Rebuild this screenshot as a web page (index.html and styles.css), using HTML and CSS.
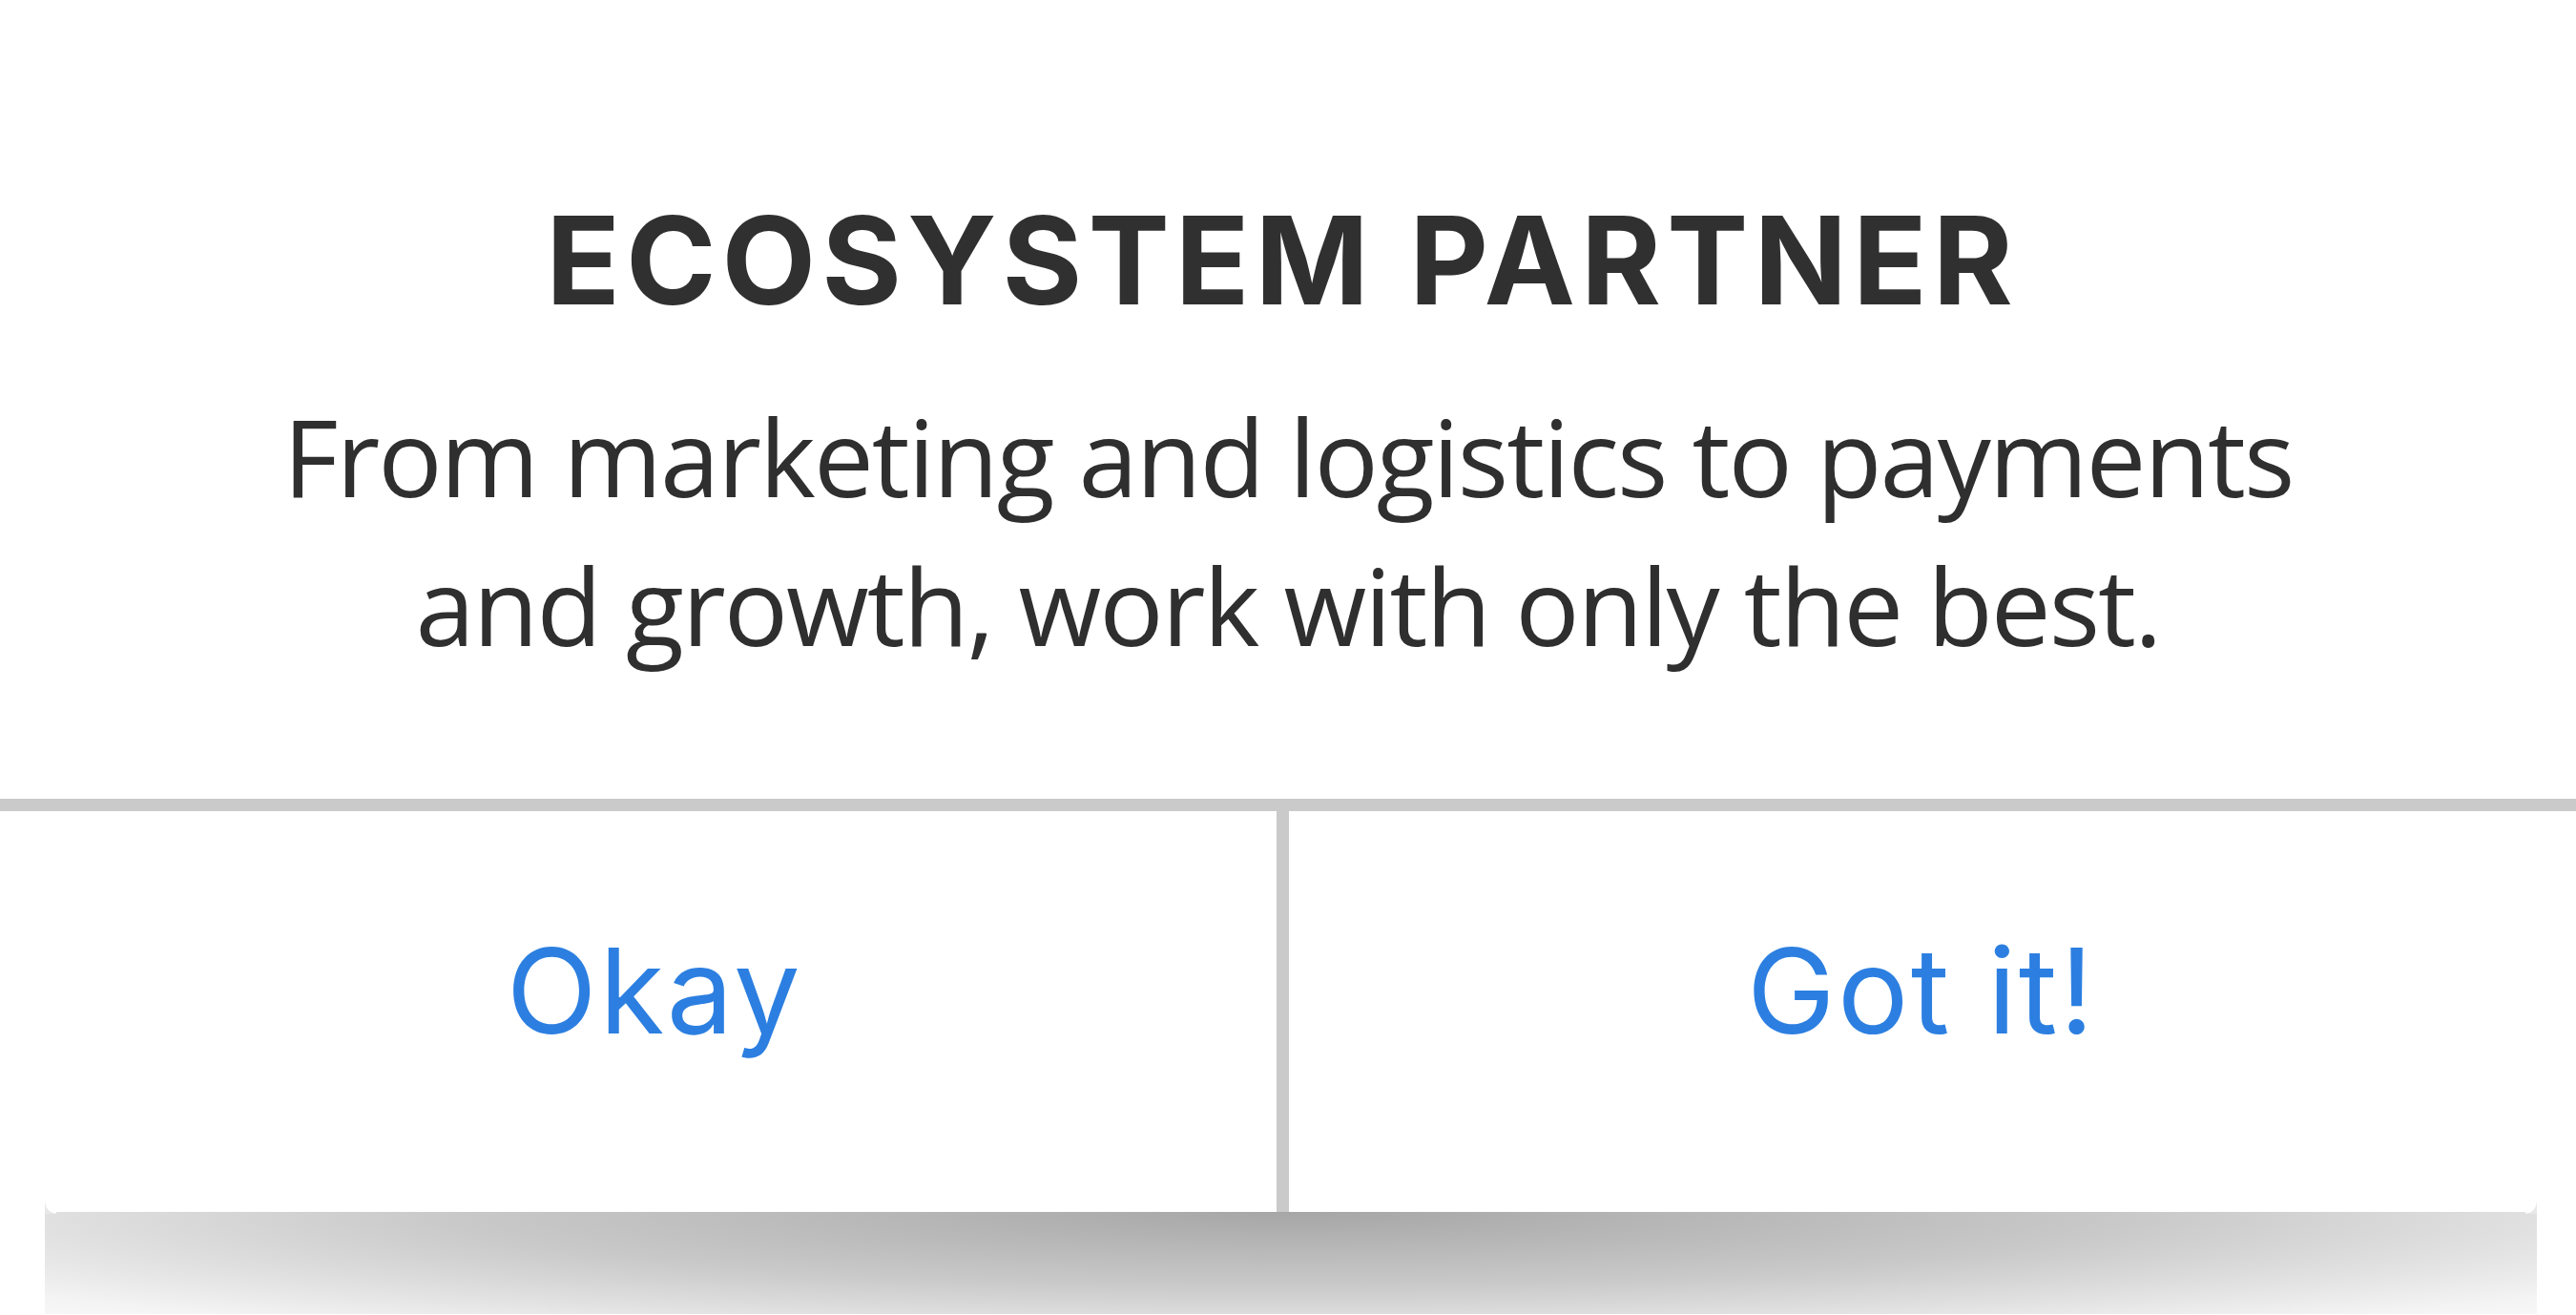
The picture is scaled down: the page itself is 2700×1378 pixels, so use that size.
FILE: index.html
```html
<!DOCTYPE html>
<html lang="en">
<head>
<meta charset="utf-8">
<title>Ecosystem Partner</title>
<link rel="stylesheet" href="styles.css">
</head>
<body>
<div class="dialog">
  <div class="content">
    <h1 class="title">ECOSYSTEM PARTNER</h1>
    <p class="message">From marketing and logistics to payments<br>and growth, work with only the best.</p>
  </div>
  <div class="actions">
    <button class="action action-left">Okay</button>
    <div class="vsep"></div>
    <button class="action action-right">Got it!</button>
  </div>
  <div class="shadow"></div>
</div>
</body>
</html>
```

FILE: styles.css
```css
html, body {
  margin: 0;
  padding: 0;
  background: #ffffff;
}

body {
  width: 2700px;
  height: 1378px;
  overflow: hidden;
}

.dialog {
  display: flex;
  flex-direction: column;
}

.content {
  padding-top: 209px;
  padding-bottom: 125px;
  text-align: center;
  border-bottom: 13px solid #cacaca;
}

.title {
  margin: 0;
  padding-right: 12px;
  font-family: "Inter", "Liberation Sans", sans-serif;
  font-weight: 700;
  font-size: 128px;
  line-height: 128px;
  letter-spacing: 6px;
  color: #303030;
}

.message {
  margin: 63px 0 0 0;
  font-family: "Open Sans", "Noto Sans", sans-serif;
  font-weight: 400;
  font-size: 112px;
  line-height: 156px;
  letter-spacing: -2px;
  color: #2f2f2f;
}

.actions {
  display: flex;
  margin: 0 58px 0 47px;
  height: 420px;
}

.action {
  flex: 0 0 calc((100% - 13px) / 2);
  box-sizing: border-box;
  border: 0;
  background: transparent;
  padding: 126px 0 0 0;
  margin: 0;
  display: flex;
  align-items: flex-start;
  justify-content: center;
  font-family: "Inter", "Liberation Sans", sans-serif;
  font-weight: 400;
  font-size: 124px;
  line-height: 124px;
  letter-spacing: 2.5px;
  color: #2c7fe1;
}

.action-left {
  padding-right: 13px;
}

.action-right {
  padding-left: 35px;
}

.vsep {
  flex: 0 0 13px;
  background: #cacaca;
}

.shadow {
  position: relative;
  margin: 0 41px 0 47px;
  height: 107px;
  background:
    radial-gradient(ellipse 75% 160% at 50% 0%, #a6a6a6 0%, #c9c9c9 45%, #f4f4f4 85%, #fbfbfb 100%);
}

.shadow::before,
.shadow::after {
  content: "";
  position: absolute;
  top: -10px;
  width: 12px;
  height: 12px;
}

.shadow::before {
  left: 0;
  background: radial-gradient(circle at 100% 0%, #ffffff 11px, #e8e8e8 12px);
}

.shadow::after {
  right: 0;
  background: radial-gradient(circle at 0% 0%, #ffffff 11px, #e8e8e8 12px);
}
```
